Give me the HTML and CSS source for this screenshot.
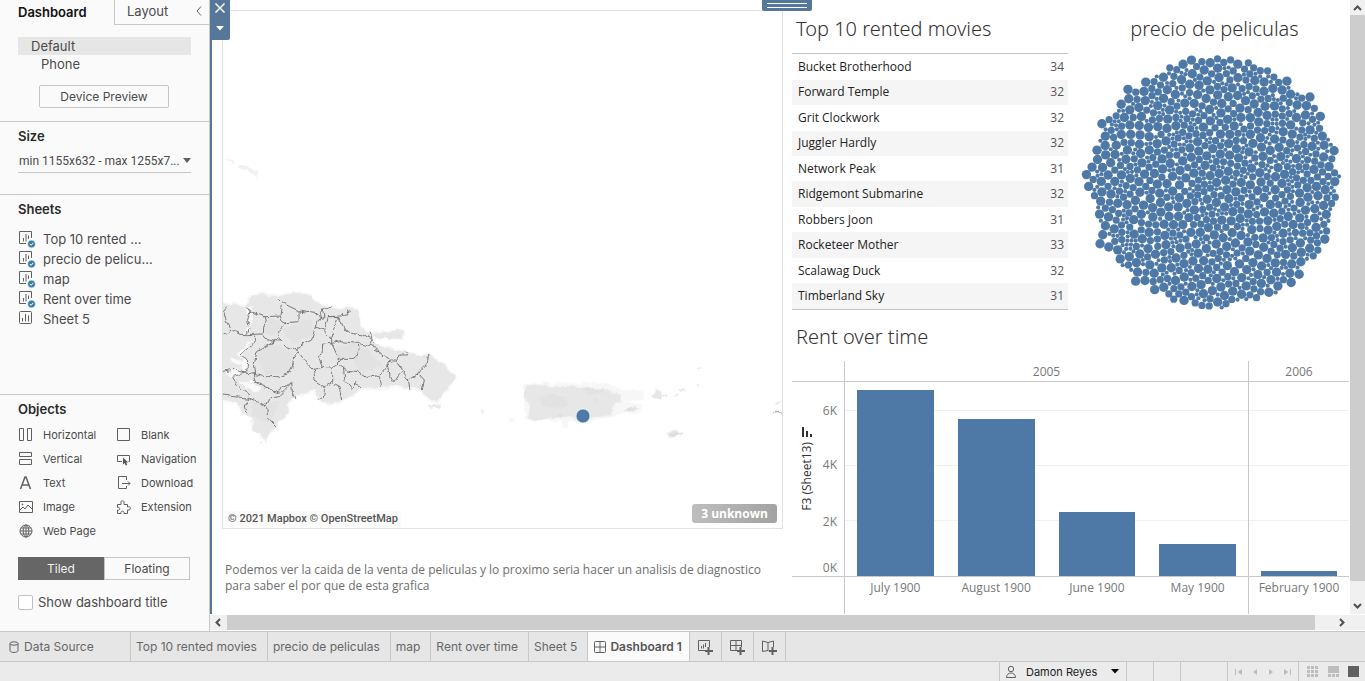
FILE: index.html
```html
<!DOCTYPE html>
<html lang="en">
<head>
<meta charset="utf-8">
<title>Dashboard 1</title>
<link rel="stylesheet" href="styles.css">
</head>
<body>
<svg class="defs" aria-hidden="true">
  <symbol id="i-used" viewBox="0 0 18 18"><path d="M8 13.500H1.500v-12h12V8M5.500 8v3.500M8 4v7.500M10.500 5.500V9"/><circle cx="13.500" cy="14" r="3.800" fill="#3a7fa5" stroke="#fafafa" stroke-width=".4"/><path d="M11.800 14l1.300 1.300 2.200-2.500" stroke="#fff"/></symbol>
</svg>

<div class="app">
  <div class="main">
    <aside class="side">
      <nav class="side-tabs">
        <button class="side-tab active">Dashboard</button>
        <button class="side-tab">Layout</button>
        <button class="collapse" aria-label="Collapse"><svg width="8" height="12" viewBox="0 0 8 12"><path d="M6 1.500L2 6l4 4.500"/></svg></button>
      </nav>
      <section class="devices">
        <button class="device chosen">Default</button>
        <button class="device phone">Phone</button>
        <button class="preview">Device Preview</button>
      </section>
      <section class="size">
        <h2><label for="size">Size</label></h2>
        <div class="select-row">
          <select id="size"><option>min 1155x632 - max 1255x7...</option></select>
          <svg class="caret" width="8" height="5" viewBox="0 0 8 5"><path d="M0 0h8L4 5z"/></svg>
        </div>
      </section>
      <section class="sheets">
        <h2>Sheets</h2>
        <ul>
          <li><svg class="ico"><use href="#i-used"/></svg>Top 10 rented ...</li>
          <li><svg class="ico"><use href="#i-used"/></svg>precio de pelicu...</li>
          <li><svg class="ico"><use href="#i-used"/></svg>map</li>
          <li><svg class="ico"><use href="#i-used"/></svg>Rent over time</li>
          <li><svg class="ico" viewBox="0 0 18 18"><rect x="1.500" y="1.500" width="12" height="12" rx="1"/><path d="M4.500 8v3.500M7.500 4v7.500M10.500 5.500v6"/></svg>Sheet 5</li>
        </ul>
      </section>
      <section class="objects">
        <h2>Objects</h2>
        <div class="object-grid">
          <button><svg viewBox="0 0 16 16"><path d="M1.500 1.500h4v12h-4zM9.500 1.500h4v12h-4z"/></svg>Horizontal</button>
          <button><svg viewBox="0 0 16 16"><path d="M1.500 1.500h12v12h-12z"/></svg>Blank</button>
          <button><svg viewBox="0 0 16 16"><path d="M1.500 1.500h12v4h-12zM1.500 8.500h12v5h-12z"/></svg>Vertical</button>
          <button><svg viewBox="0 0 16 16"><path d="M6 10.500H1.500v-6h12v6h-1"/><path d="M7 6.500v7l1.700-1.500 1 2.500 1.500-.6-1-2.400h2z" fill="#555" stroke="none"/></svg>Navigation</button>
          <button><svg viewBox="0 0 16 16"><path d="M2.500 14L7 2h1l4.500 12M4 10h7" stroke-width="1.500"/></svg>Text</button>
          <button><svg viewBox="0 0 16 16"><path d="M10.500 5V1.500h-8v12h8V11M6 8.500h8M12 6.500l2 2-2 2"/></svg>Download</button>
          <button><svg viewBox="0 0 16 16"><path d="M1.500 2.500h13v11h-13zM2 11l3-3 2 2 3-4 4 4"/><circle cx="4.500" cy="5.500" r=".5"/></svg>Image</button>
          <button><svg viewBox="0 0 16 16"><path d="M1.500 5.500H5V4c-1-3 4-3 3 0v1.500h3.500V8c4-1.500 4 4 0 3v3.500H8c1-3-4-3-3 0H1.500V11c3 1 3-3.500 0-2.500z"/></svg>Extension</button>
          <button><svg viewBox="0 0 16 16"><circle cx="8" cy="8" r="6"/><ellipse cx="8" cy="8" rx="2.800" ry="6"/><path d="M8 2v12M2 8h12M3 5h10M3 11h10"/></svg>Web Page</button>
        </div>
        <div class="mode">
          <button class="on">Tiled</button><button>Floating</button>
        </div>
        <label class="check"><input type="checkbox">Show dashboard title</label>
      </section>
    </aside>

    <div class="work">
      <div class="stage">
        <main class="canvas">
          <div class="left-col">
            <div class="map">
              <svg class="map-art" viewBox="223 11 559 517" preserveAspectRatio="xMinYMin slice">
                <defs>
                  <filter id="coast" x="-5%" y="-5%" width="110%" height="110%">
                    <feTurbulence type="fractalNoise" baseFrequency=".12" numOctaves="3" seed="4"/>
                    <feDisplacementMap in="SourceGraphic" scale="6" xChannelSelector="R" yChannelSelector="G"/>
                  </filter>
                </defs>
                <g filter="url(#coast)">
                  <g transform="translate(215 280) scale(.33333)">
                    <path class="shoal" d="M0 58L60 68 90 75 95 60 115 40 135 36 190 43 215 36 260 35 290 42 300 60 345 76 375 84 410 78 432 85 440 140 460 152 520 150 575 150 570 176 485 178 480 190 540 205 610 224 642 218 684 248 726 288 705 330 680 350 668 374 642 366 632 348 610 332 545 325 440 332 385 367 350 374 316 370 298 336 240 350 220 378 222 400 165 462 152 491 134 468 110 452 108 418 88 404 58 368 0 360z"/>
                    <path class="land" d="M0 60L60 75 88 82 98 66 115 45 135 40 160 47 190 47 215 40 260 40 290 47 300 64 345 82 375 90 410 82 430 90 437 140 455 155 480 165 475 190 540 210 575 215 610 228 640 222 680 250 722 290 700 325 680 345 665 365 645 360 635 345 610 325 545 318 500 320 440 325 410 345 385 360 350 368 320 365 300 330 240 345 215 375 218 400 190 430 165 455 152 485 138 465 115 450 112 415 90 400 60 365 0 355zM475 160L520 155 570 153 565 172 530 176 485 172zM642 374L678 378 676 386 645 382zM132 488L143 488 138 496z"/>
                    <path class="shade" d="M125 220L170 190 235 220 230 280 150 285zM200 150L285 115 295 160 235 190zM150 110L195 120 190 165 145 160zM360 200L420 195 425 230 375 238zM115 365L200 370 160 430 110 410zM390 180L460 210 500 260 430 275z"/>
                    <path class="water" d="M93 80L112 80 110 130 103 155 88 158 102 130zM118 172L95 205 85 225 100 250 95 275 80 275 85 240 68 220 95 195zM70 305L110 300 140 325 130 336 95 325zM40 237L65 235 88 248 70 255zM24 270L55 265 75 270 60 300z"/>
                  </g>
                  <g transform="translate(460 350) scale(.33333)">
                    <path class="shoal" d="M195 100L350 98 445 100 482 120 550 122 555 148 484 160 545 162 540 190 490 185 460 200 400 215 330 215 325 230 305 230 305 210 195 212 190 130zM145 202H162V216H145z"/>
                    <path class="land" d="M205 102L280 110 340 108 400 116 440 118 482 132 482 158 462 165 450 195 395 206 290 200 240 210 200 206 208 160 188 135zM62 180L75 180 69 189zM497 178L530 173 537 175 505 182zM585 120L605 120 605 145 578 142zM622 245L650 243 672 250 640 258 622 260z"/>
                    <path class="shade" d="M370 113L430 117 432 130 380 134zM290 190L310 190 308 204 290 200zM405 145L416 148 412 160 400 155zM240 145L280 130 320 145 325 165 280 175 240 165z"/>
                    <path class="mark" d="M605 132l15 5M642 137l10-2M660 123l18-7M710 58h15M710 106l8-1M496 180l38-7M622 251l48 0M945 164l20-10"/>
                    <path class="dark" d="M940 188h18l3 3 6-2"/>
                  </g>
                  <path class="land" d="M225 158l7 1 3 5zM238 164l11 4 8 4 1 5-8-5-12-4z" opacity=".6"/>
                  <g class="borders" transform="translate(215 280) scale(.33333)">
                    <path d="M38 80L25 95 35 125 50 150 75 163 95 164 140 162 150 175 180 182 198 183 215 200 240 210 252 218 235 240 232 260 220 282 195 290 150 290 118 283 80 277 50 268 20 275M50 150L22 168M95 80L105 95 98 120 105 145 92 162M104 95L150 110 195 108 200 68 187 55M200 68L250 92 280 98 300 100 315 112 325 90 350 80M252 92L252 125 215 128 203 122 195 108M150 110L155 125 143 142 142 162M215 128L195 145 187 170 198 183M120 165L115 190 78 222 98 245 95 278M180 182L125 215 118 250 122 283M240 210L260 195 290 180 300 140 315 112M300 140L325 150 350 172 350 190 375 185 430 190 470 200 485 210 510 230 527 240 515 260 492 285 500 320M315 112L330 110 325 90M330 150L340 110 370 110 350 172M340 110L375 108 395 105 400 90M370 110L390 150 410 160 440 165 475 180 465 155M475 180L465 200M350 190L320 192 318 220 312 235 322 262 350 265 370 250 372 238 350 190M252 218L275 250 295 268 322 262M295 268L300 300 330 320 350 308 372 320 380 360M330 320L325 350 310 358M350 265L350 308M372 238L420 238 432 210 430 190M370 250L395 270 425 275 455 295 492 285M385 260L390 300 410 325 420 308 440 318M527 240L545 240 550 225 575 225 568 215M515 250L525 285 537 305 550 285 560 275 545 240M560 275L580 298 610 280 630 260 640 222M580 298L585 330M610 280L628 300 622 330M118 283L122 305 150 320 190 340 200 320 230 308 232 335 240 358M95 278L75 283 52 290 70 320 100 340 100 355 155 378 165 350 190 348 230 308M20 345L60 350 100 355 88 375 95 405M155 378L158 415 180 438"/>
                  </g>
                </g>
                <circle cx="583" cy="416" r="7" fill="#4e79a7" stroke="#fff" stroke-width=".7"/>
              </svg>
              <p class="credit">© 2021 Mapbox © OpenStreetMap</p>
              <button class="unknown">3 unknown</button>
            </div>
            <p class="note">Podemos ver la caida de la venta de peliculas y lo proximo seria hacer un analisis de diagnostico para saber el por que de esta grafica</p>
          </div>
          <div class="right-col">
            <div class="upper">
              <section class="movies">
                <h1>Top 10 rented movies</h1>
                <table>
                  <tr><th>Bucket Brotherhood</th><td>34</td></tr>
                  <tr><th>Forward Temple</th><td>32</td></tr>
                  <tr><th>Grit Clockwork</th><td>32</td></tr>
                  <tr><th>Juggler Hardly</th><td>32</td></tr>
                  <tr><th>Network Peak</th><td>31</td></tr>
                  <tr><th>Ridgemont Submarine</th><td>32</td></tr>
                  <tr><th>Robbers Joon</th><td>31</td></tr>
                  <tr><th>Rocketeer Mother</th><td>33</td></tr>
                  <tr><th>Scalawag Duck</th><td>32</td></tr>
                  <tr><th>Timberland Sky</th><td>31</td></tr>
                </table>
              </section>
              <section class="prices">
                <h1>precio de peliculas</h1>
                <svg id="bubbles" viewBox="-128 -128 256 256"></svg>
              </section>
            </div>
            <section class="rent">
              <h1>Rent over time</h1>
              <div class="chart">
                <div class="corner"></div>
                <div class="year">2005</div>
                <div class="year">2006</div>
                <div class="axis">
                  <div class="axis-title">
                    <svg width="12" height="12" viewBox="0 0 12 12"><path d="M1 1h2v10H1zM5 5h2v6H5zM9 8h2v3H9z"/></svg>
                    <span>F3 (Sheet13)</span>
                  </div>
                  <div class="ticks"><span style="bottom:85%">6K</span><span style="bottom:57%">4K</span><span style="bottom:28%">2K</span><span style="bottom:4%">0K</span></div>
                </div>
                <div class="plot four">
                  <div class="bar" style="height:96%"></div>
                  <div class="bar" style="height:81%"></div>
                  <div class="bar" style="height:33%"></div>
                  <div class="bar" style="height:16.500%"></div>
                </div>
                <div class="plot"><div class="bar" style="height:2.700%"></div></div>
                <div class="foot"></div>
                <div class="months four"><span>July 1900</span><span>August 1900</span><span>June 1900</span><span>May 1900</span></div>
                <div class="months"><span>February 1900</span></div>
              </div>
            </section>
          </div>
          <div class="handle">
            <button aria-label="Remove"><svg width="12" height="12" viewBox="0 0 12 12"><path d="M1.500 1.500l9 9M10.500 1.500l-9 9" stroke="#fff" stroke-width="1.500"/></svg></button>
            <button aria-label="More options"><svg width="8" height="5" viewBox="0 0 8 5"><path d="M0 0h8L4 4.500z" fill="#fff" stroke="none"/></svg></button>
          </div>
          <div class="grip"></div>
        </main>
        <div class="vscroll">
          <svg width="9" height="6" viewBox="0 0 9 6"><path d="M1 5l3.500-3.500L8 5"/></svg>
          <i></i>
          <svg width="9" height="6" viewBox="0 0 9 6"><path d="M1 1l3.500 3.500L8 1"/></svg>
        </div>
      </div>
      <div class="hscroll">
        <svg width="6" height="9" viewBox="0 0 6 9"><path d="M5 1L1.500 4.500 5 8"/></svg>
        <i></i>
        <svg width="6" height="9" viewBox="0 0 6 9"><path d="M1 1l3.500 3.500L1 8"/></svg>
      </div>
    </div>
  </div>

  <nav class="tabs">
    <button class="source"><svg width="10" height="12" viewBox="0 0 10 12"><path d="M1 2.500v7c0 2.600 8 2.600 8 0v-7"/><ellipse cx="5" cy="2.500" rx="4" ry="1.700"/></svg>Data Source</button>
    <button>Top 10 rented movies</button>
    <button>precio de peliculas</button>
    <button>map</button>
    <button>Rent over time</button>
    <button>Sheet 5</button>
    <button class="current"><svg width="12" height="12" viewBox="0 0 12 12"><rect x=".5" y=".5" width="11" height="11" rx="1"/><path d="M6 .5v11M.5 6h11"/></svg>Dashboard 1</button>
    <button class="new" aria-label="New worksheet"><svg width="16" height="16" viewBox="0 0 16 16"><path d="M8 11.500H1.500v-10h11V8M4.500 7v2.500M6.500 5.500v4M8.500 4v4"/><path d="M11.500 8v8M8 12h8" stroke-width="2"/></svg></button>
    <button class="new" aria-label="New dashboard"><svg width="16" height="16" viewBox="0 0 16 16"><path d="M8 11.500H1.500v-10h11V8M7 1.500v10M1.500 6.500h11"/><path d="M11.500 8v8M8 12h8" stroke-width="2"/></svg></button>
    <button class="new" aria-label="New story"><svg width="16" height="16" viewBox="0 0 16 16"><path d="M8 12.500l-1-1-5.500 1V2L7 3.500 12.500 2v6M7 3.500v8"/><path d="M11.500 8v8M8 12h8" stroke-width="2"/></svg></button>
  </nav>
  <footer class="status">
    <div class="user"><svg width="12" height="14" viewBox="0 0 12 14"><circle cx="6" cy="4" r="2.700"/><path d="M1.500 12.500c0-6 9-6 9 0z"/></svg><span>Damon Reyes</span><svg class="drop" width="8" height="5" viewBox="0 0 8 5"><path d="M0 0h8L4 4.500z"/></svg></div>
    <div class="cell"></div><div class="cell"></div><div class="cell wide"></div>
    <div class="pager">
      <svg width="8" height="8" viewBox="0 0 8 8"><path d="M0 1h1v6H0zM7 1v6L2.500 4z"/></svg>
      <svg width="8" height="8" viewBox="0 0 8 8"><path d="M6 1v6L2 4z"/></svg>
      <svg width="8" height="8" viewBox="0 0 8 8"><path d="M2 1v6l4-3z"/></svg>
      <svg width="8" height="8" viewBox="0 0 8 8"><path d="M7 1h1v6H7zM1 1v6l4.500-3z"/></svg>
    </div>
    <div class="views">
      <svg width="11" height="11" viewBox="0 0 11 11"><path d="M0 0h3v3H0zM4 0h3v3H4zM8 0h3v3H8zM0 4h3v3H0zM4 4h3v3H4zM8 4h3v3H8zM0 8h3v3H0zM4 8h3v3H4zM8 8h3v3H8z"/></svg>
      <svg width="11" height="11" viewBox="0 0 11 11"><path d="M0 0h11v7H0zM0 8h3v3H0zM4 8h3v3H4zM8 8h3v3H8z"/></svg>
      <svg class="dark-view" width="11" height="11" viewBox="0 0 11 11"><path d="M0 0h11v11H0z"/></svg>
    </div>
  </footer>
</div>
<script src="bubbles.js"></script>
</body>
</html>
```
FILE: styles.css
```css
* { box-sizing: border-box; }
body { margin: 0; background: #fff; color: #4a4a4a; font-family: "Open Sans", "Noto Sans", sans-serif; font-size: 13px; }
h1, h2, p, ul { margin: 0; padding: 0; }
ul { list-style: none; }
button, select { font: inherit; color: inherit; background: none; border: 0; padding: 0; margin: 0; }
svg { display: block; flex: none; fill: none; stroke: #606060; }
.defs { position: absolute; width: 0; height: 0; }

.app { height: 100vh; display: flex; flex-direction: column; overflow: hidden; }
.main { flex: 1; min-height: 0; display: flex; }

/* side pane */
.side { width: 210px; flex: none; background: #fafafa; border-right: 1px solid #c8c8c8; font-family: Inter, "Noto Sans", sans-serif; display: flex; flex-direction: column; }
.side h2 { font-size: 13px; line-height: 18px; font-weight: 600; color: #2a2a2a; }
.side section { padding: 0 18px; border-bottom: 1px solid #c8c8c8; }
.side .objects { border-bottom: 0; }
.side-tabs { height: 25px; display: flex; }
.side-tab { width: 95px; padding-left: 12px; padding-bottom: 2px; text-align: left; border: 1px solid #c8c8c8; border-width: 0 0 1px 1px; line-height: 20px; }
.side-tab.active { width: 114px; padding-left: 18px; border: 0; font-weight: 600; color: #111; }
.side-tab:nth-child(2) { flex: 1; border-right: 0; }
.collapse { width: 18px; border-bottom: 1px solid #c8c8c8; }
.collapse svg { margin-left: 4px; margin-bottom: 2px; }
.side .devices { height: 97px; padding-top: 12px; display: flex; flex-direction: column; }
.device { height: 18px; line-height: 18px; padding-left: 13px; text-align: left; }
.device.chosen { background: #e6e6e6; }
.device.phone { padding-left: 23px; }
.preview { width: 130px; height: 23px; margin: 12px 0 0 21px; border: 1px solid #c4c4c4; border-radius: 2px; font-size: 12px; }
.side .size { height: 73px; padding-top: 5px; }
.select-row { margin-top: 4px; height: 24px; display: flex; align-items: center; border-bottom: 1px solid #c8c8c8; }
.select-row select { appearance: none; flex: 1; min-width: 0; padding-left: 1px; font-size: 12px; font-family: Roboto, sans-serif; }
.caret { fill: #606060; stroke: none; }
.side .sheets { height: 200px; padding-top: 5px; }
.sheets ul { margin-top: 11px; }
.sheets li { height: 20px; display: flex; align-items: center; gap: 7px; }
.ico { width: 18px; height: 18px; }
.side .objects { padding-top: 5px; flex: 1; }
.object-grid { margin: 5px -18px 0 0; display: grid; grid-template-columns: 98px 1fr; grid-auto-rows: 24px; font-size: 11px; }
.object-grid button { display: flex; align-items: center; gap: 9px; text-align: left; }
.object-grid svg { width: 16px; height: 16px; }
.mode { margin-top: 14px; height: 23px; display: flex; width: 172px; font-size: 12px; }
.mode button { flex: 1; border: 1px solid #c4c4c4; }
.mode .on { background: #666; border-color: #666; color: #f0f0f0; }
.check { margin-top: 13px; display: flex; align-items: center; gap: 5px; line-height: 18px; }
.check input { appearance: none; width: 15px; height: 15px; margin: 0; border: 1px solid #c0c0c0; border-radius: 2px; background: #fff; }

/* dashboard canvas */
.work { flex: 1; min-width: 0; display: flex; flex-direction: column; }
.stage { flex: 1; min-height: 0; display: flex; }
.canvas { flex: 1; min-width: 0; position: relative; border-left: 2px solid #557799; padding: 0 1px 0 10px; display: grid; grid-template-columns: 561fr 557fr; column-gap: 9px; overflow: hidden; }
.left-col { min-width: 0; min-height: 0; padding-top: 10px; display: flex; flex-direction: column; }
.map { position: relative; flex: 1; min-height: 0; border: 1px solid #e2e2e2; overflow: hidden; }
.map-art { width: 100%; height: 100%; }
.shoal { fill: #f7f7f7; stroke: none; }
.land { fill: #e7e7e7; stroke: none; }
.shade { fill: #e2e2e2; stroke: none; }
.water { fill: #fafafa; stroke: none; }
.mark { stroke: #d2d2d2; stroke-width: 3; }
.dark { stroke: #777; stroke-width: 3; }
.borders { stroke: #777; stroke-width: 3; }
.credit { position: absolute; left: 2px; bottom: 2px; padding: 0 3px; background: #fafafa; font: 500 11px/15px Roboto, sans-serif; color: #555; }
.unknown { position: absolute; right: 5px; bottom: 5px; width: 85px; height: 19px; border-radius: 3px; background: linear-gradient(100deg, #bebebe, #a2a2a2); color: #fff; font-weight: 700; font-size: 12px; line-height: 18px; }
.note { height: 85px; padding: 33px 3px 0; font-size: 12px; line-height: 16px; color: #6e6e6e; }
.right-col { min-width: 0; min-height: 0; display: flex; flex-direction: column; }
.right-col h1 { font-family: "Noto Sans", sans-serif; font-size: 20px; line-height: 28px; font-weight: 300; color: #333; }
.upper { display: grid; grid-template-columns: 276fr 269fr; column-gap: 12px; }
.movies h1 { padding: 15px 0 0 4px; height: 53px; }
.movies table { width: 100%; height: 257px; border-collapse: collapse; border-top: 1px solid #c4c4c4; border-bottom: 1px solid #c4c4c4; font-size: 12px; line-height: 16px; }
.movies tr:nth-child(even) { background: #f5f5f5; }
.movies th { padding: 0 6px; text-align: left; font-weight: 500; color: #222; }
.movies td { padding: 0 4px; text-align: right; color: #555; }
.prices { height: 310px; text-align: center; padding-top: 15px; }
#bubbles { width: 100%; margin-top: 5px; fill: #4e79a7; stroke: none; }
.rent { flex: 1; min-height: 0; display: flex; flex-direction: column; }
.rent h1 { padding: 13px 0 0 4px; height: 51px; }
.chart { flex: 1; min-height: 0; display: grid; grid-template-columns: 52px 4fr 1fr; grid-template-rows: 21px 1fr 37px; color: #777; font-size: 12px; }
.corner, .year { border-bottom: 1px solid #c8c8c8; }
.year { text-align: center; line-height: 21px; }
.year, .plot, .months { border-left: 1px solid #c8c8c8; }
.axis { position: relative; border-bottom: 1px solid #c8c8c8; display: flex; padding-left: 8px; }
.axis-title { display: flex; flex-direction: column; align-items: center; gap: 4px; padding-top: 44px; color: #333; }
.axis-title svg { fill: #333; stroke: none; }
.axis-title span { writing-mode: vertical-rl; transform: rotate(180deg); line-height: 14px; }
.ticks { position: absolute; right: 7px; top: 0; bottom: 0; width: 20px; }
.ticks span { position: absolute; right: 0; line-height: 16px; margin-bottom: -8px; }
.plot { display: grid; align-items: end; border-bottom: 1px solid #c8c8c8; background: linear-gradient(#f0f0f0, #f0f0f0) 0 14.500% / 100% 1px no-repeat, linear-gradient(#f0f0f0, #f0f0f0) 0 43% / 100% 1px no-repeat, linear-gradient(#f0f0f0, #f0f0f0) 0 71.500% / 100% 1px no-repeat; }
.four { grid-template-columns: repeat(4, 1fr); }
.bar { margin: 0 12px; background: #4e79a7; }
.months { display: grid; text-align: center; line-height: 22px; white-space: nowrap; }
.handle { position: absolute; left: -2px; top: 0; width: 20px; height: 40px; background: #557799; border-radius: 0 0 2px 0; display: flex; flex-direction: column; align-items: center; gap: 12px; padding-top: 2px; }
.grip { position: absolute; left: 550px; top: 0; width: 50px; height: 11px; background: linear-gradient(#fff, #fff) 5px 3px / 40px 1px no-repeat, linear-gradient(#fff, #fff) 5px 7px / 40px 1px no-repeat, #557799; border-radius: 0 0 2px 2px; }
.vscroll { width: 15px; flex: none; background: #f0f0f0; display: flex; flex-direction: column; align-items: center; justify-content: space-between; padding: 5px 0; }
.vscroll i { width: 15px; flex: 1; margin: 4px 0 22px; background: #cdcdcd; }
.hscroll { height: 17px; flex: none; background: #f0f0f0; border-top: 1px solid #fff; border-bottom: 1px solid #fff; display: flex; align-items: center; padding: 0 20px 0 5px; }
.hscroll i { height: 15px; flex: 1; margin: 0 24px 0 6px; background: #cdcdcd; }
.vscroll svg, .hscroll svg { stroke: #505050; stroke-width: 2; }

/* sheet tabs and status bar */
.tabs { height: 31px; flex: none; display: flex; background: #e6e6e6; border: 1px solid #c8c8c8; border-width: 1px 0; font-family: Inter, sans-serif; font-size: 12px; color: #666; }
.tabs button { padding: 0 10px 0 5px; border-right: 1px solid #c8c8c8; white-space: nowrap; }
.tabs .source { width: 131px; padding-left: 9px; display: flex; align-items: center; gap: 5px; }
.tabs .current { display: flex; align-items: center; gap: 4px; padding: 0 7px 0 6px; background: #fafafa; font-weight: 600; color: #555; }
.tabs .new { width: 32px; padding: 0 0 0 7px; }
.status { height: 19px; flex: none; display: flex; justify-content: flex-end; background: #ebebeb; font-family: Inter, sans-serif; font-size: 11px; color: #222; }
.status div { border-left: 1px solid #c8c8c8; display: flex; align-items: center; }
.user { width: 127px; padding: 0 7px 0 5px; gap: 9px; }
.user .drop { fill: #000; stroke: none; margin-left: auto; }
.cell { width: 27px; }
.cell.wide { width: 47px; }
.pager { width: 71px; padding: 0 7px; justify-content: space-between; }
.views { width: 67px; padding: 0 6px 0 8px; justify-content: space-between; }
.pager svg, .views svg { fill: #bdbdbd; stroke: none; }
.views .dark-view { fill: #606060; }
```
FILE: bubbles.js
```js
// Packs one circle per film around a growing front chain; area follows the rental rate.
(function () {
  var seed = 7;
  function rnd() {
    seed = (seed * 1664525 + 1013904223) % 4294967296;
    return seed / 4294967296;
  }
  var rates = [0.99, 2.99, 4.99];
  var circles = [];
  for (var i = 0; i < 1000; i++) circles.push({ r: Math.sqrt(rates[Math.floor(rnd() * 3)]) * 2.14 });

  function place(b, a, c) {
    var dx = b.x - a.x, dy = b.y - a.y, d2 = dx * dx + dy * dy;
    var a2 = Math.pow(a.r + c.r, 2), b2 = Math.pow(b.r + c.r, 2), x, y;
    if (a2 > b2) {
      x = (d2 + b2 - a2) / (2 * d2);
      y = Math.sqrt(Math.max(0, b2 / d2 - x * x));
      c.x = b.x - x * dx - y * dy;
      c.y = b.y - x * dy + y * dx;
    } else {
      x = (d2 + a2 - b2) / (2 * d2);
      y = Math.sqrt(Math.max(0, a2 / d2 - x * x));
      c.x = a.x + x * dx - y * dy;
      c.y = a.y + x * dy + y * dx;
    }
  }
  function hits(a, b) {
    var dr = a.r + b.r - 1e-6, dx = b.x - a.x, dy = b.y - a.y;
    return dr > 0 && dr * dr > dx * dx + dy * dy;
  }
  function score(n) {
    var a = n.c, b = n.next.c, ab = a.r + b.r;
    var dx = (a.x * b.r + b.x * a.r) / ab, dy = (a.y * b.r + b.y * a.r) / ab;
    return dx * dx + dy * dy;
  }
  var a = circles[0], b = circles[1], c = circles[2];
  a.x = -b.r; a.y = 0; b.x = a.r; b.y = 0;
  place(b, a, c);
  a = { c: a }; b = { c: b }; c = { c: c };
  a.next = c.prev = b;
  b.next = a.prev = c;
  c.next = b.prev = a;

  pack: for (i = 3; i < circles.length; ++i) {
    place(a.c, b.c, circles[i]);
    c = { c: circles[i] };
    var j = b.next, k = a.prev, sj = b.c.r, sk = a.c.r;
    do {
      if (sj <= sk) {
        if (hits(j.c, c.c)) { b = j; a.next = b; b.prev = a; --i; continue pack; }
        sj += j.c.r; j = j.next;
      } else {
        if (hits(k.c, c.c)) { a = k; a.next = b; b.prev = a; --i; continue pack; }
        sk += k.c.r; k = k.prev;
      }
    } while (j !== k.next);
    c.prev = a; c.next = b; a.next = b.prev = b = c;
    var best = score(a);
    while ((c = c.next) !== b) {
      var s = score(c);
      if (s < best) { a = c; best = s; }
    }
    b = a.next;
  }

  var reach = 0;
  circles.forEach(function (p) { reach = Math.max(reach, Math.hypot(p.x, p.y) + p.r); });
  var k2 = 128 / reach, svg = document.getElementById('bubbles');
  circles.forEach(function (p) {
    var el = document.createElementNS('http://www.w3.org/2000/svg', 'circle');
    el.setAttribute('cx', (p.x * k2).toFixed(2));
    el.setAttribute('cy', (p.y * k2).toFixed(2));
    el.setAttribute('r', (p.r * k2).toFixed(2));
    svg.appendChild(el);
  });
})();
```
